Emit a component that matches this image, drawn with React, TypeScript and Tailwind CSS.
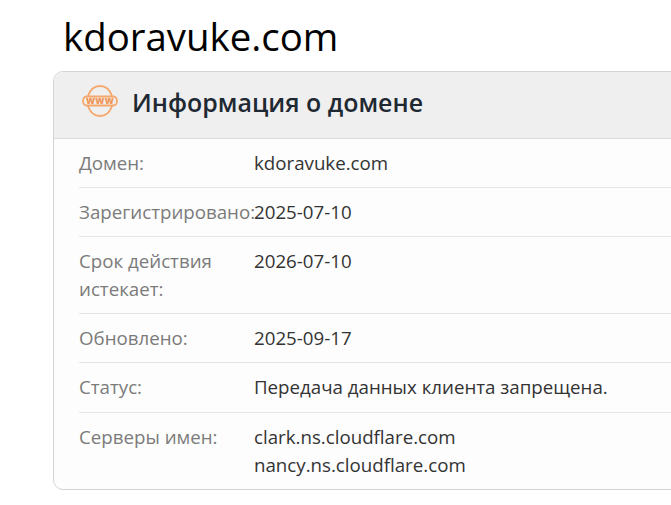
const rows: { label: string; value: string[] }[] = [
  { label: 'Домен:', value: ['kdoravuke.com'] },
  { label: 'Зарегистрировано:', value: ['2025-07-10'] },
  { label: 'Срок действия истекает:', value: ['2026-07-10'] },
  { label: 'Обновлено:', value: ['2025-09-17'] },
  { label: 'Статус:', value: ['Передача данных клиента запрещена.'] },
  { label: 'Серверы имен:', value: ['clark.ns.cloudflare.com', 'nancy.ns.cloudflare.com'] },
]

function WwwIcon() {
  return (
    <svg className="mb-[4px] shrink-0" width="36" height="32" viewBox="0 0 36 32" fill="none" stroke="#f5a76c" strokeWidth="1.8">
      <path d="M6 11C8 5 12.500 1 18 1S28 5 30 11" />
      <path d="M6 21C8 27 12.500 31 18 31S28 27 30 21" />
      <path d="M4.500 11.500H31.500C33.500 11.500 35 13.500 35 16S33.500 20.500 31.500 20.500H4.500C2.500 20.500 1 18.500 1 16S2.500 11.500 4.500 11.500Z" />
      <text x="18" y="19.300" textAnchor="middle" fontSize="10" fontWeight="800" fontFamily="'Open Sans', sans-serif" fill="#f0985a" stroke="none" letterSpacing="0.2">
        www
      </text>
    </svg>
  )
}

export default function App() {
  return (
    <div className="w-[671px] h-[505px] overflow-hidden bg-white font-['Open_Sans',sans-serif]">
      <h1 className="ml-[63px] pt-[11px] text-[38.4px] leading-[50px] text-black">kdoravuke.com</h1>
      <div className="ml-[53px] mt-[10px] w-[700px] rounded-[10px] border border-[#d4d4d4] bg-[#fdfdfd] overflow-hidden">
        <div className="flex items-center gap-[14px] h-[67.06px] pb-[5px] pl-[28px] bg-[#efefef] border-b border-[#dcdcdc]">
          <WwwIcon />
          <h2 className="text-[24.96px] font-semibold text-[#1f2933]">Информация о домене</h2>
        </div>
        <div className="pl-[25px]">
          {rows.map((row, i) => (
            <div key={row.label} className={`flex py-[10px] text-[18.72px] leading-[28.08px] ${i < rows.length - 1 ? 'border-b border-[#e5e5e5]' : ''}`}>
              <div className="w-[175px] shrink-0 text-[#7b7b7b]">{row.label}</div>
              <div className="text-[#333333]">
                {row.value.map(v => (
                  <div key={v}>{v}</div>
                ))}
              </div>
            </div>
          ))}
        </div>
      </div>
    </div>
  )
}
